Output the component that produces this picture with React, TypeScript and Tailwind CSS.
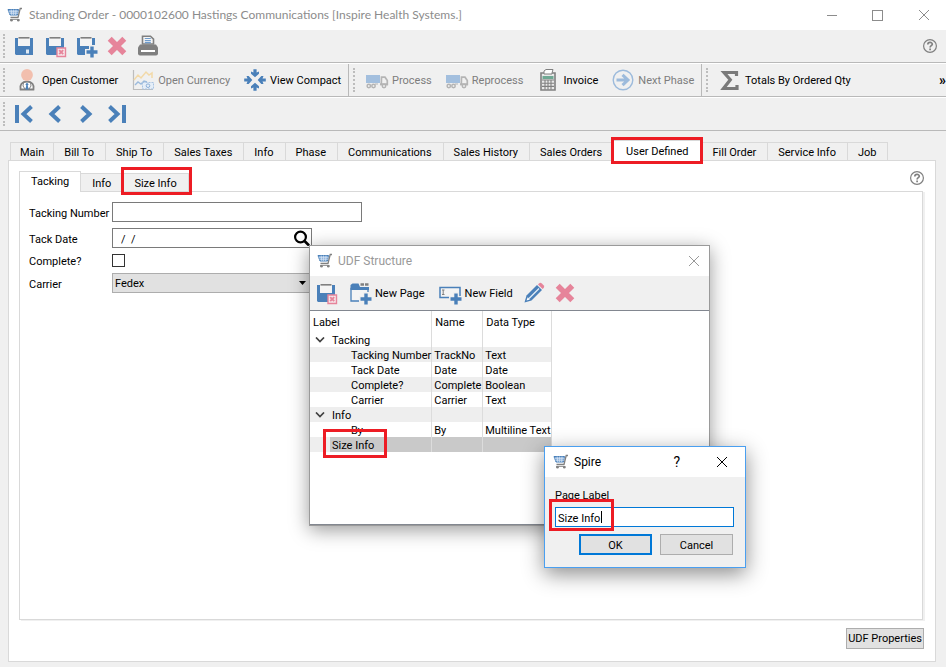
import { useState, type ReactNode } from "react";

type IconProps = { className?: string };

const BLUE = "#4a80b9";
const PINK = "#e6849a";
const GREY = "#808080";

function CartIcon({ className = "" }: IconProps) {
  return (
    <svg className={"size-4 shrink-0 " + className} viewBox="0 0 16 16" fill="none">
      <path d="M1 2.5h10.5l-1 5.5H3z" fill="#7fa9d8" stroke={BLUE} />
      <path d="M1.5 4.3h10M2.3 6.2h9M4.2 2.5l.6 5.5M6.6 2.5V8M9 2.5L8.6 8" stroke="#dce8f5" strokeWidth=".7" />
      <path d="M15 1.5h-1.8l-2.2 9H3.5" stroke={GREY} strokeWidth="1.3" />
      <path d="M3 12.5h9.5" stroke={GREY} strokeWidth=".8" />
      <circle cx="4.5" cy="13.3" r="1.3" fill={GREY} />
      <circle cx="11.3" cy="13.3" r="1.3" fill={GREY} />
    </svg>
  );
}

function Floppy() {
  return (
    <>
      <path d="M3 4h3v8h12V4h3v17H4l-1-1z" fill={BLUE} />
      <path d="M6 5h12v7H6z" fill="#f4f4f4" />
      <path d="M6.500 3.800h11" stroke={GREY} strokeWidth="1.600" />
      <path d="M14 15.500h3v4h-3z" fill="#dfe9f3" />
    </>
  );
}

function PlusBadge() {
  return (
    <>
      <path d="M18 11v13M11 18h13" stroke="#f0f0f0" strokeWidth="6" />
      <path d="M18 12.500v11M12.500 18h11" stroke={BLUE} strokeWidth="3.400" />
    </>
  );
}

function SaveIcon() {
  return <svg className="size-6" viewBox="0 0 24 24"><Floppy /></svg>;
}

function SaveCloseIcon() {
  return (
    <svg className="size-6" viewBox="0 0 24 24">
      <Floppy />
      <path d="M14 14h8.500v8.500H14z" fill="#f6e6ea" stroke={PINK} strokeWidth="1.400" />
      <path d="M16.200 16.200l4 4M20.200 16.200l-4 4" stroke={PINK} strokeWidth="1.900" />
    </svg>
  );
}

function SaveNewIcon() {
  return <svg className="size-6" viewBox="0 0 24 24"><Floppy /><PlusBadge /></svg>;
}

function DeleteIcon() {
  return (
    <svg className="size-6" viewBox="0 0 24 24">
      <path d="M4.700 4.700l14.600 14.600M19.300 4.700L4.700 19.300" stroke={PINK} strokeWidth="5.600" />
    </svg>
  );
}

function PrintIcon() {
  return (
    <svg className="size-6" viewBox="0 0 24 24">
      <path d="M6.500 10V2.200h8l3 3V10z" fill="#f5f5f5" stroke={GREY} strokeWidth="1.600" />
      <path d="M8.800 4.500h6M8.800 6.600h6M8.800 8.700h6" stroke="#6f9ccc" strokeWidth="1.200" />
      <path d="M4 10.500h16l2 3v6a2 2 0 0 1-2 2H4a2 2 0 0 1-2-2v-6z" fill={GREY} />
      <path d="M5 17h14" stroke="#fff" strokeWidth="2" />
    </svg>
  );
}

function CustomerIcon() {
  return (
    <svg className="size-6" viewBox="0 0 24 24" fill="none">
      <path d="M5.500 21.500c-1-4.500 1.500-8 6.500-8s7.500 3.500 6.500 8z" fill="#fff" stroke={GREY} strokeWidth="1.800" />
      <path d="M12 14.500l1.600 2-.9 1 1 4h-3.400l1-4-.9-1z" fill={BLUE} />
      <path d="M8.500 14l-.5 4 2 3M15.500 14l.5 4-2 3" stroke={GREY} />
      <circle cx="12" cy="7" r="5.900" fill="#f2bfae" />
    </svg>
  );
}

function CurrencyIcon() {
  return (
    <svg className="size-6" viewBox="0 0 24 24" fill="none">
      <path d="M2.500 2v19.500H22" stroke="#bdbdbd" strokeWidth="1.200" />
      <path d="M3 12l4-5 3 3 5-6 3 3 3-2v5" stroke="#f2d9a8" strokeWidth="1.500" />
      <path d="M4 17l3-3 3 2 3-3 3 1" stroke="#9dbbdc" strokeWidth="1.400" />
      <rect x="11.500" y="14.500" width="11" height="6.500" fill="#e5eef8" stroke="#a8c3e2" strokeDasharray="2 1" />
      <circle cx="17" cy="17.700" r="1.800" stroke="#8db0d8" />
    </svg>
  );
}

function CompactIcon() {
  return (
    <svg className="size-6" viewBox="0 0 24 24" fill={BLUE}>
      {[0, 90, 180, 270].map((a) => (
        <path key={a} transform={`rotate(${a} 12 12)`} d="M12 9.300L8 5.700V3.500l2.400 1V1.200h3.200v3.300l2.400-1v2.200z" />
      ))}
    </svg>
  );
}

function TruckIcon() {
  return (
    <svg className="size-6" viewBox="0 0 24 24" fill="none">
      <path d="M1 7h14v8H1z" fill="#a3bfde" />
      <path d="M16.500 9.200h3.500l2.300 3.300v4h-6z" stroke="#b4b4b4" strokeWidth="1.700" />
      <path d="M15 16.300h8" stroke="#b4b4b4" strokeWidth="2" />
      <g fill="#eee" stroke="#b4b4b4" strokeWidth="1.500">
        <circle cx="3.800" cy="18" r="1.700" />
        <circle cx="8.500" cy="18" r="1.700" />
        <circle cx="19" cy="18" r="1.700" />
      </g>
      <path d="M10 16h3" stroke="#b4b4b4" />
    </svg>
  );
}

function InvoiceIcon() {
  return (
    <svg className="size-6" viewBox="0 0 24 24" fill="none">
      <path d="M5 5h14v17H5z" fill="#e9e9e9" stroke={GREY} strokeWidth="1.600" />
      <path d="M8 6V3l2-1.500h7L16 5v1z" fill="#fff" stroke={GREY} />
      <path d="M6.500 8h11v3h-11z" fill="#6fa893" />
      <path d="M6 12h12M6 15.200h12M6 18.400h12M9 12v9.500M12 12v9.500M15 12v9.500" stroke={GREY} strokeWidth="1.100" />
    </svg>
  );
}

function NextIcon() {
  return (
    <svg className="size-6" viewBox="0 0 24 24" fill="none">
      <circle cx="12" cy="12" r="9.800" stroke="#9dbbdc" strokeWidth="1.400" />
      <path d="M5.500 12h11M11.500 6.800l5.500 5.200-5.500 5.200" stroke="#9dbbdc" strokeWidth="3" />
    </svg>
  );
}

function SumIcon() {
  return (
    <svg className="size-6" viewBox="0 0 24 24" fill="none">
      <path d="M18.500 8V4.500H6l6.300 7.300L5.500 20.500h13.500V17" stroke="#7a7a7a" strokeWidth="3.200" />
    </svg>
  );
}

function NavIcon({ kind }: { kind: "first" | "prev" | "next" | "last" }) {
  const flip = kind === "next" || kind === "last";
  const bar = kind === "first" || kind === "last";
  return (
    <svg className="size-6" viewBox="0 0 24 24" fill="none" stroke={BLUE}>
      <g transform={flip ? "translate(24 0) scale(-1 1)" : undefined}>
        {bar && <path d="M5 3v18" strokeWidth="4" />}
        <path d={bar ? "M19.500 4.500L11.500 12l8 7.500" : "M16.500 4.500L8.500 12l8 7.500"} strokeWidth="4" />
      </g>
    </svg>
  );
}

function HelpIcon() {
  return (
    <svg className="size-4" viewBox="0 0 16 16" fill="none" stroke={GREY}>
      <circle cx="8" cy="8" r="6.400" strokeWidth="1.200" />
      <path d="M5.800 6.600c0-2.800 4.500-2.800 4.500-.4 0 1.500-2.200 1.500-2.200 3.300" strokeWidth="1.700" />
      <path d="M8.100 10.500v1.700" strokeWidth="1.700" />
    </svg>
  );
}

function NewPageIcon() {
  return (
    <svg className="size-6" viewBox="0 0 24 24" fill="none">
      <path d="M3 7.500h17V20H3z" fill="#f4f4f4" stroke={BLUE} strokeWidth="1.300" />
      <path d="M2.500 4l2-1.500h6l1.500 3.500h9v3H2.500z" fill={BLUE} />
      <path d="M12.500 3.500h3.500M17 3.500h3.500" stroke={GREY} strokeWidth="2.400" />
      <PlusBadge />
    </svg>
  );
}

function NewFieldIcon() {
  return (
    <svg className="size-6" viewBox="0 0 24 24" fill="none">
      <path d="M2 6.500h20v10H2z" fill="#f4f4f4" stroke={BLUE} strokeWidth="1.500" />
      <path d="M4 9h2.500M5.200 9v4.500M4 13.500h2.500" stroke={GREY} />
      <PlusBadge />
    </svg>
  );
}

function EditIcon() {
  return (
    <svg className="size-6" viewBox="0 0 24 24">
      <path d="M2.500 21.500l2-7L15 4l5 5L9.500 19.500z" fill={BLUE} />
      <path d="M7 17.500L17 7.500" stroke="#e6eef7" strokeWidth="1.300" />
      <path d="M4.500 19.500l1.200-3.300 2.200 2.200z" fill="#fff" />
      <path d="M16 3.500l1-1a2 2 0 0 1 2.800 0l1.800 1.800a2 2 0 0 1 0 2.800l-1 1z" fill={PINK} />
    </svg>
  );
}

function Cross({ className = "" }: IconProps) {
  return (
    <svg className={"size-3 " + className} viewBox="0 0 12 12" stroke="currentColor" fill="none">
      <path d="M1 1l10 10M11 1L1 11" />
    </svg>
  );
}

function Handle() {
  return (
    <span className="flex w-2 shrink-0 justify-center self-stretch py-1" aria-hidden="true">
      <span className="w-0 border-l-2 border-dotted border-[#bdbdbd]" />
    </span>
  );
}

function Highlight({ className }: { className: string }) {
  return <span aria-hidden="true" className={"pointer-events-none absolute z-10 border-3 border-[#ed1c24] " + className} />;
}

function IconButton({ label, children, className = "w-[31px]" }: { label: string; children: ReactNode; className?: string }) {
  return (
    <button type="button" aria-label={label} className={"flex h-8 items-center justify-center " + className}>
      {children}
    </button>
  );
}

function ToolButton({ icon, label, disabled = false }: { icon: ReactNode; label: string; disabled?: boolean }) {
  return (
    <button type="button" disabled={disabled} className="flex h-8 shrink-0 items-center gap-[3px] pr-1.5 pl-[7px] whitespace-nowrap disabled:text-[#7d7d7d]">
      {icon}
      <span className="pt-0.5">{label}</span>
    </button>
  );
}

const mainTabs = [
  "Main", "Bill To", "Ship To", "Sales Taxes", "Info", "Phase", "Communications",
  "Sales History", "Sales Orders", "User Defined", "Fill Order", "Service Info", "Job",
];

type Row = { label: string; name?: string; type?: string; level: 1 | 2; open?: boolean; selected?: boolean };

const rows: Row[] = [
  { label: "Tacking", level: 1, open: true },
  { label: "Tacking Number", name: "TrackNo", type: "Text", level: 2 },
  { label: "Tack Date", name: "Date", type: "Date", level: 2 },
  { label: "Complete?", name: "Complete", type: "Boolean", level: 2 },
  { label: "Carrier", name: "Carrier", type: "Text", level: 2 },
  { label: "Info", level: 1, open: true },
  { label: "By", name: "By", type: "Multiline Text", level: 2 },
  { label: "Size Info", level: 1, selected: true },
];

function MainTabs() {
  return (
    <div role="tablist" className="flex h-[18px] items-end pl-[2px]">
      {mainTabs.map((tab) => {
        const on = tab === "User Defined";
        return (
          <button
            key={tab}
            type="button"
            role="tab"
            aria-selected={on}
            className={
              "relative shrink-0 border-[#d9d9d9] pt-0.5 whitespace-nowrap last:border-r " +
              (on ? "-mb-px h-[21px] border-x border-t bg-white px-3" : "h-[18px] border-t border-l pr-[11px] pl-2.5 first:px-[9px]")
            }
          >
            {tab}
            {on && <Highlight className="-inset-x-[3px] -top-1 -bottom-[3px]" />}
          </button>
        );
      })}
    </div>
  );
}

function Form() {
  const label = "pt-0.5 leading-[11px]";
  return (
    <div className="grid grid-cols-[83px_1fr] items-center gap-y-1.5 pt-2.5 pl-[9px]">
      <label htmlFor="number" className={label}>Tacking Number</label>
      <input id="number" className="h-5 w-[250px] border border-[#7a7a7a] bg-white px-1" />
      <label htmlFor="date" className={label}>Tack Date</label>
      <div className="relative w-[200px]">
        <input id="date" defaultValue="/  /" className="block h-5 w-full border border-[#7a7a7a] bg-white px-2 pt-0.5 whitespace-pre" />
        <svg className="absolute top-0.5 right-0.5 size-4" viewBox="0 0 16 16" fill="none" stroke="#000">
          <circle cx="6.500" cy="7" r="5.400" strokeWidth="2.200" />
          <path d="M10.500 11l4.500 4.500" strokeWidth="2.600" />
        </svg>
      </div>
      <label htmlFor="complete" className={label}>Complete?</label>
      <input id="complete" type="checkbox" className="size-[13px] appearance-none border border-[#333] bg-white" />
      <label htmlFor="carrier" className={label}>Carrier</label>
      <div className="relative w-[200px]">
        <select id="carrier" className="block h-5 w-full appearance-none border border-[#adadad] bg-[#e1e1e1] px-0.5 pt-px">
          <option>Fedex</option>
        </select>
        <svg className="pointer-events-none absolute top-2 right-1.5 h-1 w-[7px]" viewBox="0 0 7 4"><path d="M0 0h7L3.500 4z" /></svg>
      </div>
    </div>
  );
}

function StructureWindow() {
  return (
    <section aria-label="UDF Structure" className="absolute top-[245px] left-[309px] flex h-[281px] w-[401px] flex-col border border-[#9a9a9a] bg-[#f0f0f0] shadow-[0_4px_18px_rgba(0,0,0,0.4)]">
      <header className="flex h-[30px] shrink-0 items-center gap-[5px] bg-white pr-[9px] pl-[7px] text-xs text-[#999]">
        <CartIcon />
        <h2 className="flex-1">UDF Structure</h2>
        <button type="button" aria-label="Close"><Cross /></button>
      </header>
      <div className="flex h-[34px] shrink-0 items-center pl-1">
        <IconButton label="Save and close" className="mr-[3px] w-6"><SaveCloseIcon /></IconButton>
        <ToolButton icon={<NewPageIcon />} label="New Page" />
        <ToolButton icon={<NewFieldIcon />} label="New Field" />
        <IconButton label="Edit"><EditIcon /></IconButton>
        <IconButton label="Delete"><DeleteIcon /></IconButton>
      </div>
      <div className="flex-1 border-t border-b border-[#828790] bg-white">
        <table className="table-fixed border-separate border-spacing-0">
          <colgroup>
            <col className="w-[122px]" />
            <col className="w-[51px]" />
            <col className="w-[69px]" />
          </colgroup>
          <thead>
            <tr className="h-[21px] text-left">
              {["Label", "Name", "Data Type"].map((h) => (
                <th key={h} className="border-r border-[#dcdcdc] px-[3px] pt-0.5 pb-0 font-normal">{h}</th>
              ))}
            </tr>
          </thead>
          <tbody>
            {rows.map((row, i) => {
              const cell =
                "border-r border-[#dcdcdc] p-0 pt-0.5 pl-0.5 leading-[13px] whitespace-nowrap " + (row.selected ? "bg-[#c9c9c9]" : "");
              return (
                <tr key={row.label} className={"h-[15px] " + (i % 2 ? "bg-[#eeeeee]" : "")}>
                  <td className="border-r border-[#dcdcdc] p-0 whitespace-nowrap">
                    <div className="flex h-[15px]">
                      <span className="flex w-5 shrink-0 items-center justify-center">
                        {row.open && (
                          <svg className="h-[6px] w-[10px]" viewBox="0 0 10 6" fill="none" stroke="#404040" strokeWidth="1.700"><path d="M1 .5l4 4 4-4" /></svg>
                        )}
                      </span>
                      <span className={"relative flex-1 pt-0.5 leading-[13px] " + (row.level === 2 ? "pl-[21px]" : "pl-0.5") + (row.selected ? " bg-[#c9c9c9]" : "")}>
                        {row.label}
                        {row.selected && <Highlight className="-top-2 -left-[7px] h-[29px] w-16" />}
                      </span>
                    </div>
                  </td>
                  <td className={cell}>{row.name}</td>
                  <td className={cell}>{row.type}</td>
                </tr>
              );
            })}
          </tbody>
        </table>
      </div>
    </section>
  );
}

function LabelDialog() {
  const [value, setValue] = useState("Size Info");
  return (
    <section role="dialog" aria-label="Spire" className="absolute top-[446px] left-[544px] w-[202px] border border-[#4a9ff0] bg-[#f0f0f0] pb-3 shadow-[0_6px_20px_rgba(0,0,0,0.45)]">
      <header className="flex h-[30px] items-center gap-[5px] bg-white pr-[17px] pl-2 text-xs">
        <CartIcon />
        <h2 className="flex-1">Spire</h2>
        <button type="button" aria-label="Help" className="mr-[31px] text-sm">?</button>
        <button type="button" aria-label="Close"><Cross /></button>
      </header>
      <div className="px-2.5 pt-[11px]">
        <label htmlFor="page-label" className="block h-[19px] leading-4">Page Label</label>
        <div className="relative">
          <input id="page-label" value={value} onChange={(e) => setValue(e.target.value)} className="block h-5 w-[179px] border border-[#0078d7] bg-white px-0.5 pt-0.5 outline-none" />
          <span aria-hidden="true" className="absolute top-1 left-[46px] h-3 w-px bg-black" />
          <Highlight className="-top-2 -left-1.5 h-8 w-[65px]" />
        </div>
        <div className="mt-[7px] flex gap-2 pl-6">
          <button type="button" className="h-[21px] w-[73px] border-2 border-[#0078d7] bg-[#e1e1e1] pt-0.5">OK</button>
          <button type="button" className="h-[21px] w-[73px] border border-[#adadad] bg-[#e1e1e1] pt-0.5">Cancel</button>
        </div>
      </div>
    </section>
  );
}

export default function App() {
  return (
    <div className="relative flex min-h-screen flex-col overflow-hidden bg-[#f0f0f0] font-[Roboto,'Noto_Sans',sans-serif] text-[11px] leading-4 text-black">
      <header className="flex h-[30px] shrink-0 items-center gap-1.5 bg-white pr-4 pl-[7px] text-[#8c8c8c]">
        <CartIcon />
        <h1 className="flex-1 pb-px font-[Lato,sans-serif] text-xs">Standing Order - 0000102600 Hastings Communications [Inspire Health Systems.]</h1>
        <button type="button" aria-label="Minimize" className="mr-[29px] h-px w-2.5 bg-current" />
        <button type="button" aria-label="Maximize" className="mr-[29px] size-[11px] border border-current" />
        <button type="button" aria-label="Close"><Cross /></button>
      </header>

      <div className="flex h-[33px] shrink-0 items-center border-b border-[#b9b9b9] pr-2">
        <Handle />
        <IconButton label="Save"><SaveIcon /></IconButton>
        <IconButton label="Save and close"><SaveCloseIcon /></IconButton>
        <IconButton label="Save and new"><SaveNewIcon /></IconButton>
        <IconButton label="Delete"><DeleteIcon /></IconButton>
        <IconButton label="Print"><PrintIcon /></IconButton>
        <span className="flex-1" />
        <button type="button" aria-label="Help"><HelpIcon /></button>
      </div>

      <div className="flex h-[34px] shrink-0 items-center overflow-hidden border-t border-b border-t-white border-b-[#b9b9b9]">
        <div className="flex h-full w-[349px] shrink-0 items-center border-r border-[#b9b9b9]">
          <Handle />
          <ToolButton icon={<CustomerIcon />} label="Open Customer" />
          <ToolButton icon={<CurrencyIcon />} label="Open Currency" disabled />
          <ToolButton icon={<CompactIcon />} label="View Compact" />
        </div>
        <div className="flex h-full w-[353px] shrink-0 items-center border-r border-[#b9b9b9] pl-px">
          <Handle />
          <ToolButton icon={<TruckIcon />} label="Process" disabled />
          <ToolButton icon={<TruckIcon />} label="Reprocess" disabled />
          <ToolButton icon={<InvoiceIcon />} label="Invoice" />
          <ToolButton icon={<NextIcon />} label="Next Phase" disabled />
        </div>
        <div className="flex h-full flex-1 items-center pl-px">
          <Handle />
          <ToolButton icon={<SumIcon />} label="Totals By Ordered Qty" />
          <span className="flex-1" />
          <button type="button" aria-label="More" className="text-sm font-bold">»</button>
        </div>
      </div>

      <div className="flex h-[34px] shrink-0 items-center border-t border-b border-t-white border-b-[#b9b9b9]">
        <Handle />
        <IconButton label="First"><NavIcon kind="first" /></IconButton>
        <IconButton label="Previous"><NavIcon kind="prev" /></IconButton>
        <IconButton label="Next"><NavIcon kind="next" /></IconButton>
        <IconButton label="Last"><NavIcon kind="last" /></IconButton>
      </div>

      <main className="flex flex-1 flex-col pt-[11px] pr-2.5 pb-[5px] pl-2">
        <MainTabs />
        <div className="flex flex-1 flex-col border border-[#d9d9d9] bg-white px-2.5 pt-2.5 pb-3">
          <div role="tablist" className="flex h-5 items-end">
            <button type="button" role="tab" aria-selected="true" className="relative z-10 -mb-px h-[21px] border-x border-t border-[#d9d9d9] bg-white px-[11px]">Tacking</button>
            <button type="button" role="tab" aria-selected="false" className="h-[18px] border-t border-[#d9d9d9] bg-[#f0f0f0] px-[11px] pt-0.5">Info</button>
            <button type="button" role="tab" aria-selected="false" className="relative h-[18px] border-x border-t border-[#d9d9d9] bg-[#f0f0f0] px-[11px] pt-0.5">
              Size Info
              <Highlight className="-top-[7px] -right-1 -bottom-1 -left-0.5" />
            </button>
            <span className="flex-1" />
            <button type="button" aria-label="Help" className="mb-[5px]"><HelpIcon /></button>
          </div>
          <div className="mr-0.5 flex-1 border border-[#d9d9d9] shadow-[2px_1px_0_#f0f0f0]">
            <Form />
          </div>
          <button type="button" className="mt-2 mr-px h-[21px] self-end border border-[#adadad] bg-[#e1e1e1] px-px pt-px">UDF Properties</button>
        </div>
      </main>

      <StructureWindow />
      <LabelDialog />
    </div>
  );
}
